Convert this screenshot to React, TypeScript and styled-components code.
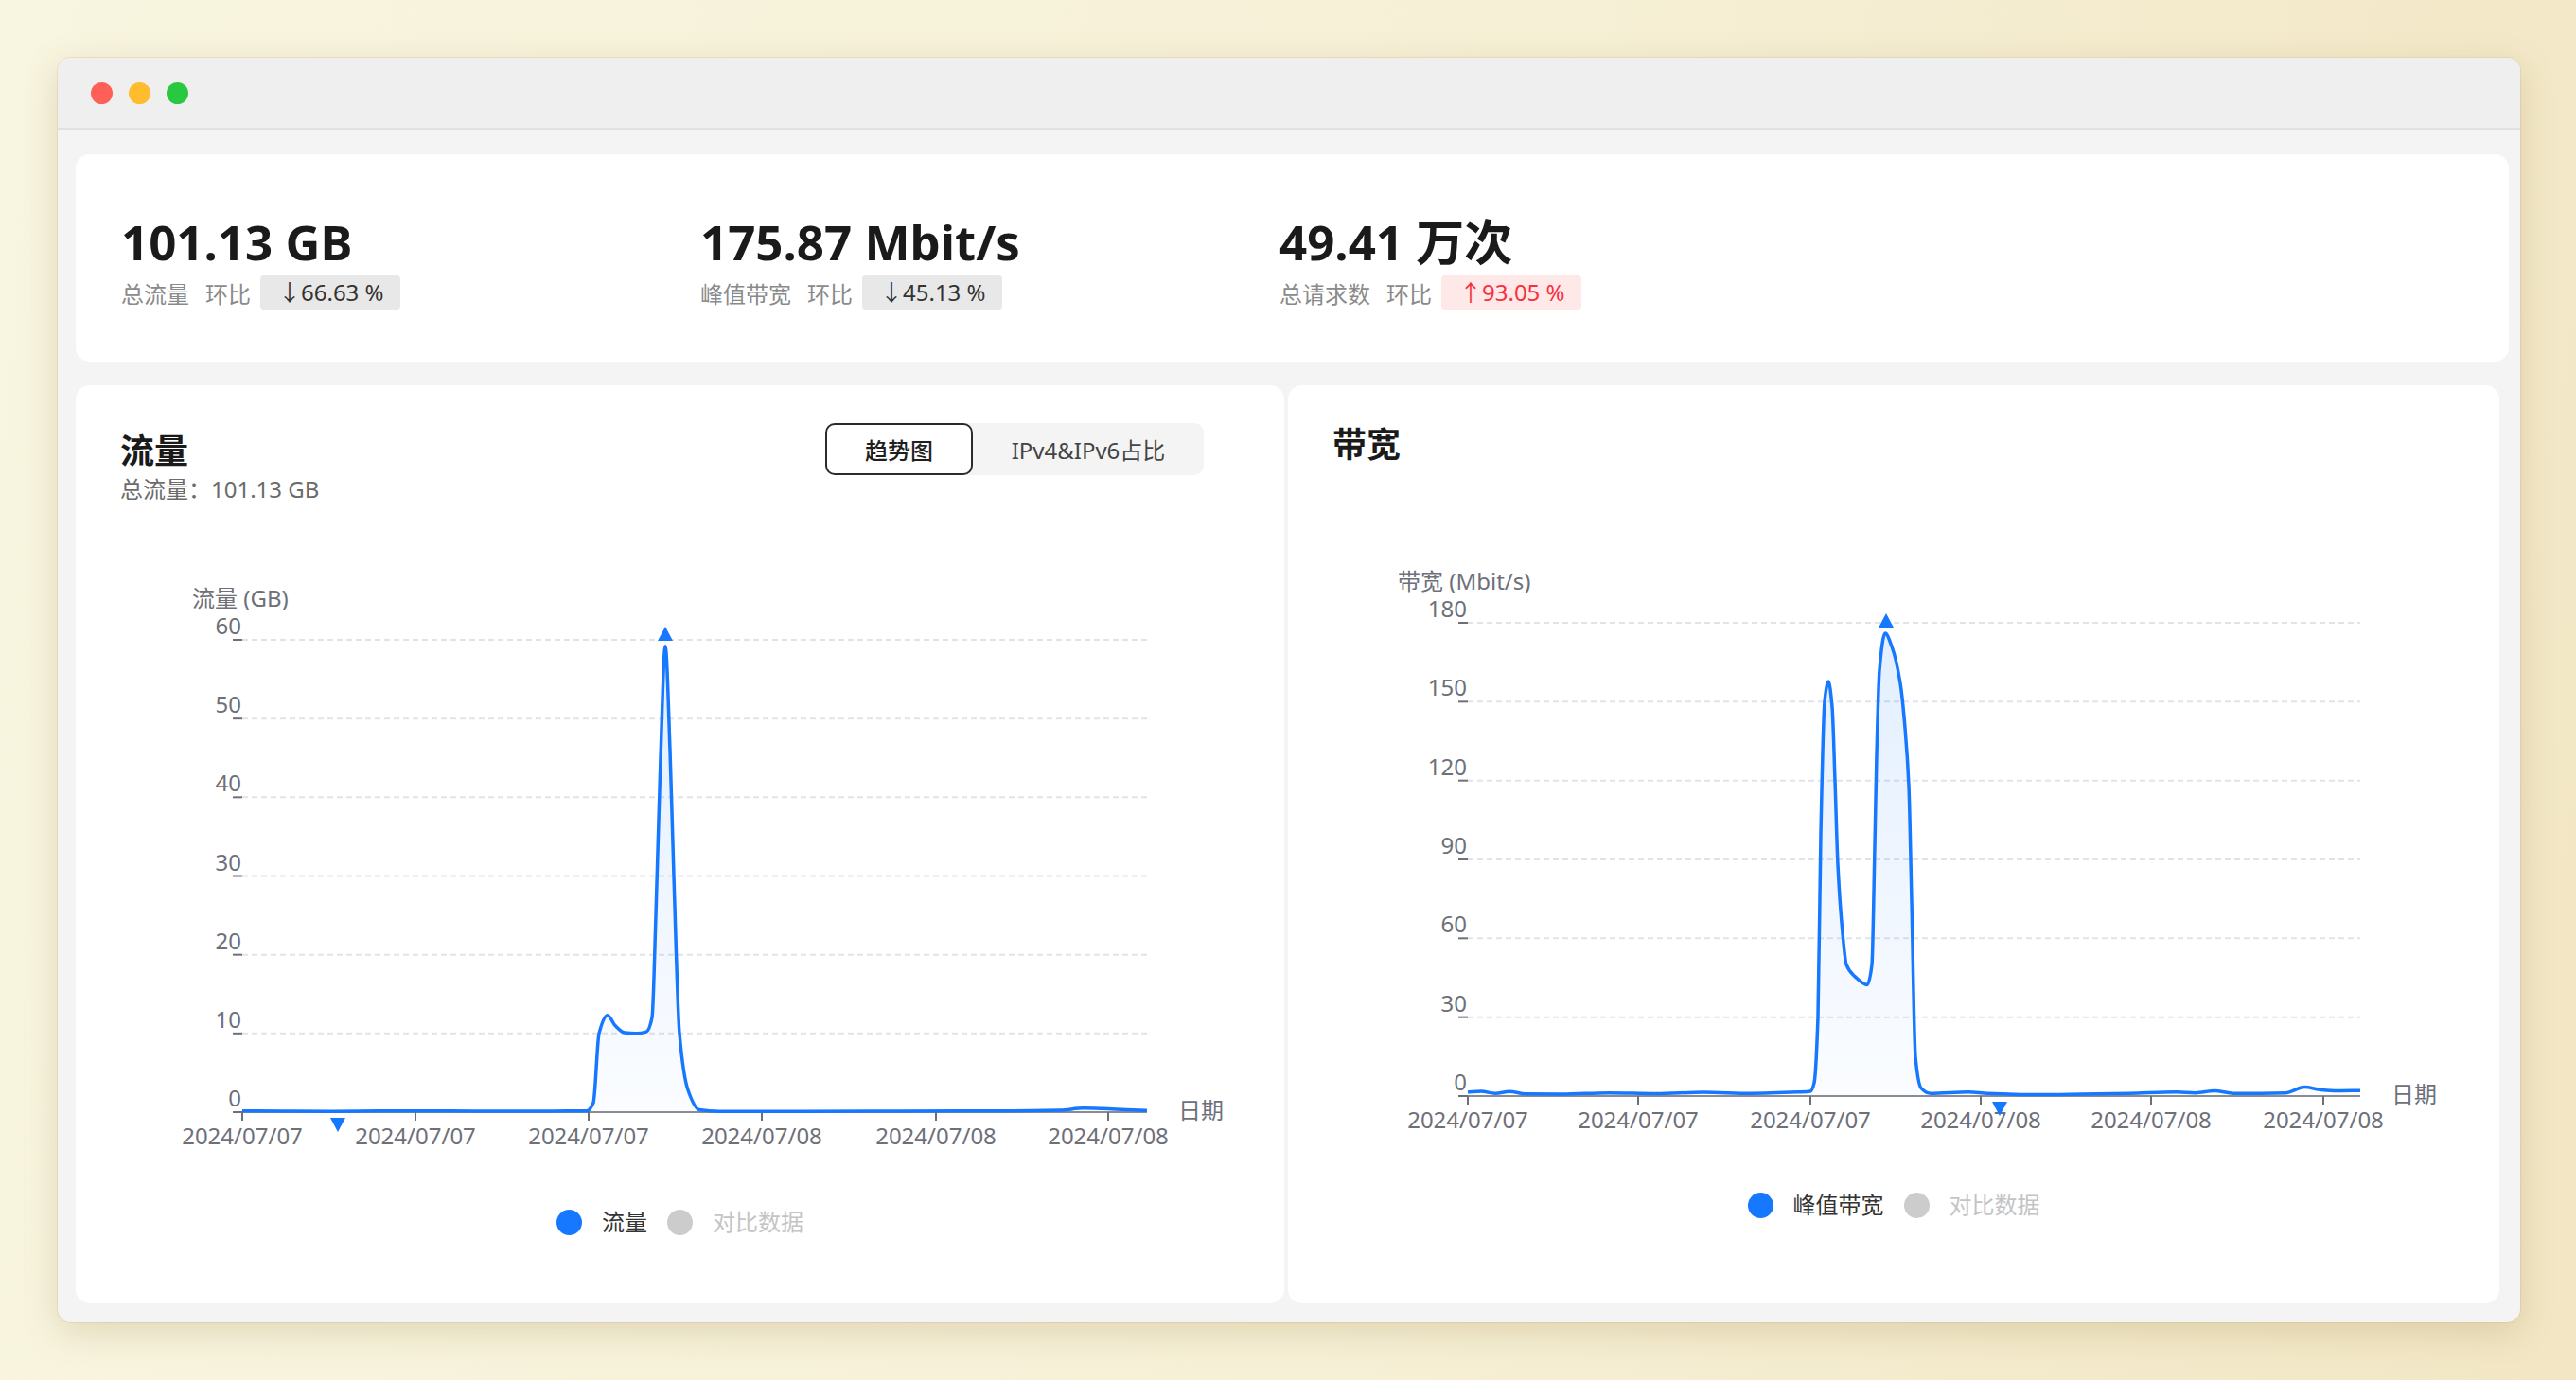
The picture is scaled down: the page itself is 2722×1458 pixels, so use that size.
import React from 'react';
import styled, { createGlobalStyle } from 'styled-components';

const FONT = `"Noto Sans", "Noto Sans CJK SC", sans-serif`;
const BLUE = '#1677ff';

const GlobalStyle = createGlobalStyle`
  html, body { margin: 0; height: 100%; }
  body {
    font-family: ${FONT};
    background: linear-gradient(100deg, #f8f5e0 0%, #f6f0d6 55%, #f2e6c4 100%);
  }
  #root { height: 100%; }
`;

const Page = styled.div`
  height: 100vh;
  box-sizing: border-box;
  padding: 61px 59px 61px 61px;
  display: flex;
`;

const Window = styled.div`
  flex: 1;
  display: flex;
  flex-direction: column;
  background: #f4f4f4;
  border-radius: 14px;
  overflow: hidden;
  box-shadow: 0 10px 36px rgba(140, 115, 50, 0.22), 0 0 0 1px rgba(200, 185, 140, 0.25);
`;

const TitleBar = styled.div`
  height: 74px;
  flex: none;
  display: flex;
  align-items: center;
  gap: 17px;
  padding-left: 35px;
  background: #efefef;
  border-bottom: 2px solid #e1e1e1;
`;

const Light = styled.span<{ $color: string }>`
  width: 23px;
  height: 23px;
  border-radius: 50%;
  background: ${(p) => p.$color};
`;

const Content = styled.div`
  flex: 1;
  min-height: 0;
  display: flex;
  flex-direction: column;
  gap: 25px;
  padding: 26px 12px 20px 19px;
`;

const StatCard = styled.section`
  background: #fff;
  border-radius: 15px;
  padding: 62px 48px 55px;
  display: flex;
`;

const StatItem = styled.div`
  width: 612px;
`;

const StatValue = styled.div`
  font-size: 51px;
  line-height: 60px;
  font-weight: 700;
  color: #1a1a1a;
`;

const StatMeta = styled.div`
  display: flex;
  align-items: center;
  margin-top: 6px;
  height: 36px;
  font-size: 24px;
`;

const MetaLabel = styled.span`
  color: #8a8a8a;
  & + & { margin-left: 17px; }
`;

const Badge = styled.span<{ $up?: boolean }>`
  margin-left: 10px;
  height: 36px;
  line-height: 36px;
  padding: 0 17px 0 19px;
  border-radius: 4px;
  background: ${(p) => (p.$up ? '#ffe8e8' : '#e8e8e8')};
  color: ${(p) => (p.$up ? '#f5313d' : '#333')};
`;

const ChartsRow = styled.div`
  flex: 1;
  min-height: 0;
  display: grid;
  grid-template-columns: 1277px 1280px;
  gap: 4px;
`;

const ChartCard = styled.section`
  background: #fff;
  border-radius: 15px;
  padding-top: 40px;
  display: flex;
  flex-direction: column;
  overflow: hidden;
`;

const CardHeader = styled.div<{ $h: number }>`
  height: ${(p) => p.$h}px;
  padding: 0 47px;
  display: flex;
  align-items: center;
  justify-content: space-between;
`;

const CardTitle = styled.h2`
  margin: 0;
  font-size: 36px;
  font-weight: 700;
  color: #1a1a1a;
`;

const Subtitle = styled.div`
  padding: 0 47px;
  font-size: 24px;
  line-height: 30px;
  color: #6b6b6b;
`;

const Segmented = styled.div`
  display: flex;
  width: 400px;
  height: 55px;
  margin-right: 38px;
  background: #f4f4f4;
  border-radius: 10px;
`;

const Segment = styled.button<{ $active?: boolean }>`
  box-sizing: border-box;
  height: 55px;
  flex: ${(p) => (p.$active ? '0 0 156px' : '1')};
  border: ${(p) => (p.$active ? '2px solid #2b2b2b' : 'none')};
  border-radius: 10px;
  background: ${(p) => (p.$active ? '#fff' : 'transparent')};
  font-family: ${FONT};
  font-size: 24px;
  font-weight: ${(p) => (p.$active ? 500 : 400)};
  color: ${(p) => (p.$active ? '#1f1f1f' : '#444')};
  padding: 0;
`;

const ChartSvg = styled.svg<{ $top: number }>`
  display: block;
  flex: none;
  margin-top: ${(p) => p.$top}px;
  font-family: ${FONT};
  overflow: visible;
`;

const Legend = styled.div`
  margin-top: 46px;
  display: flex;
  justify-content: center;
  gap: 21px;
  font-size: 24px;
  line-height: 30px;
`;

const LegendItem = styled.div<{ $muted?: boolean }>`
  display: flex;
  align-items: center;
  gap: 21px;
  color: ${(p) => (p.$muted ? '#c4c4c4' : '#333')};
`;

const Dot = styled.span<{ $color: string }>`
  width: 27px;
  height: 27px;
  border-radius: 50%;
  background: ${(p) => p.$color};
`;

type Pt = [number, number];

// monotone cubic, same feel as a smoothed echarts line
function monotonePath(pts: Pt[]): string {
  const n = pts.length;
  const dx: number[] = [];
  const m: number[] = [];
  for (let i = 0; i < n - 1; i++) {
    dx.push(pts[i + 1][0] - pts[i][0]);
    m.push((pts[i + 1][1] - pts[i][1]) / dx[i]);
  }
  const t: number[] = new Array(n).fill(0);
  t[0] = m[0];
  t[n - 1] = m[n - 2];
  for (let i = 1; i < n - 1; i++) {
    if (m[i - 1] * m[i] <= 0) t[i] = 0;
    else {
      const a = dx[i - 1];
      const b = dx[i];
      t[i] = (3 * (a + b)) / ((2 * b + a) / m[i - 1] + (b + 2 * a) / m[i]);
    }
  }
  let d = `M${pts[0][0]},${pts[0][1]}`;
  for (let i = 0; i < n - 1; i++) {
    const h = dx[i] / 3;
    d += ` C${pts[i][0] + h},${pts[i][1] + t[i] * h} ${pts[i + 1][0] - h},${pts[i + 1][1] - t[i + 1] * h} ${pts[i + 1][0]},${pts[i + 1][1]}`;
  }
  return d;
}

interface ChartConfig {
  id: string;
  width: number;
  offset: number; // page x of the card's left edge, data is written in page x
  x0: number;
  x1: number;
  yBase: number;
  yTop: number;
  max: number;
  step: number;
  yName: string;
  yNameX: number;
  ticks: number[];
  labels: string[];
  data: Pt[];
  maxMark: [number, number];
  minMark: [number, number];
}

const SVG_HEIGHT = 640;

function LineChart({ c, top }: { c: ChartConfig; top: number }) {
  const scale = (c.yBase - c.yTop) / c.max;
  const pts: Pt[] = c.data.map(([x, v]) => [x - c.offset, c.yBase - v * scale]);
  const line = monotonePath(pts);
  const area = `${line} L${pts[pts.length - 1][0]},${c.yBase} L${pts[0][0]},${c.yBase} Z`;
  const steps: number[] = [];
  for (let v = 0; v <= c.max; v += c.step) steps.push(v);
  const [mx, my] = c.maxMark;
  const [nx, ny] = c.minMark;

  return (
    <ChartSvg $top={top} width={c.width} height={SVG_HEIGHT}>
      <defs>
        <linearGradient id={`fill-${c.id}`} x1="0" y1="0" x2="0" y2="1">
          <stop offset="0" stopColor={BLUE} stopOpacity={0.12} />
          <stop offset="1" stopColor={BLUE} stopOpacity={0.02} />
        </linearGradient>
      </defs>
      <text x={c.yNameX} y={c.yTop - 35} fontSize={24} fill="#6e7079">{c.yName}</text>
      {steps.map((v) => {
        const y = c.yBase - v * scale;
        return (
          <g key={v}>
            {v > 0 && (
              <line x1={c.x0} x2={c.x1} y1={y} y2={y} stroke="#e0e3ea" strokeWidth={2} strokeDasharray="6 4" />
            )}
            <line x1={c.x0 - 10} x2={c.x0} y1={y} y2={y} stroke="#6e7079" strokeWidth={2} />
            <text x={c.x0 - 1} y={y - 6} fontSize={24} fill="#6e7079" textAnchor="end">{v}</text>
          </g>
        );
      })}
      <path d={area} fill={`url(#fill-${c.id})`} />
      <line x1={c.x0} x2={c.x1} y1={c.yBase} y2={c.yBase} stroke="#8a8c94" strokeWidth={2} />
      {c.ticks.map((tx, i) => (
        <g key={tx}>
          <line x1={tx} x2={tx} y1={c.yBase} y2={c.yBase + 9} stroke="#6e7079" strokeWidth={2} />
          <text x={tx} y={c.yBase + 34} fontSize={24} fill="#6e7079" textAnchor="middle">{c.labels[i]}</text>
        </g>
      ))}
      <text x={c.x1 + 33} y={c.yBase + 7} fontSize={24} fill="#6e7079">日期</text>
      <path d={line} fill="none" stroke={BLUE} strokeWidth={3.5} strokeLinejoin="round" />
      <polygon points={`${mx - 8},${my} ${mx + 8},${my} ${mx},${my - 15}`} fill={BLUE} />
      <polygon points={`${nx - 8},${ny} ${nx + 8},${ny} ${nx},${ny + 15}`} fill={BLUE} />
    </ChartSvg>
  );
}

const DATES = ['2024/07/07', '2024/07/07', '2024/07/07', '2024/07/08', '2024/07/08', '2024/07/08'];

const flowChart: ChartConfig = {
  id: 'flow',
  width: 1277,
  offset: 80,
  x0: 176,
  x1: 1132,
  yBase: 585,
  yTop: 86,
  max: 60,
  step: 10,
  yName: '流量 (GB)',
  yNameX: 123,
  ticks: [176, 359, 542, 725, 909, 1091],
  labels: DATES,
  data: [
    [256, 0.15], [300, 0.12], [350, 0.1], [400, 0.14], [450, 0.16], [500, 0.12], [550, 0.12],
    [600, 0.14], [620, 0.15], [627, 1.2], [633, 10], [642, 12.3], [650, 11], [660, 10.1],
    [672, 10], [683, 10.2], [689, 12], [693, 25], [698, 45], [703, 59.2], [708, 46], [712, 30],
    [718, 10], [727, 2.8], [739, 0.3], [760, 0.1], [850, 0.1], [950, 0.12], [1050, 0.15],
    [1120, 0.25], [1145, 0.5], [1165, 0.45], [1190, 0.3], [1212, 0.2],
  ],
  maxMark: [623, 87],
  minMark: [277, 591],
};

const bandwidthChart: ChartConfig = {
  id: 'bw',
  width: 1280,
  offset: 1361,
  x0: 190,
  x1: 1133,
  yBase: 586,
  yTop: 86,
  max: 180,
  step: 30,
  yName: '带宽 (Mbit/s)',
  yNameX: 116,
  ticks: [190, 370, 552, 732, 912, 1094],
  labels: DATES,
  data: [
    [1551, 1.5], [1565, 1.8], [1580, 1.0], [1595, 1.7], [1612, 0.8], [1650, 0.7], [1700, 1.2],
    [1750, 0.9], [1800, 1.4], [1850, 1.0], [1900, 1.5], [1913, 1.8], [1917, 5], [1921, 30],
    [1924, 100], [1928, 150], [1932, 157.7], [1936, 148], [1939, 120], [1942, 88], [1947, 62],
    [1951, 50], [1960, 45.5], [1973, 42.3], [1978, 50], [1981, 95], [1983, 130], [1986, 162],
    [1992, 176], [1999, 171], [2008, 157], [2013, 140], [2017, 118], [2020, 74], [2024, 15],
    [2030, 3], [2040, 1], [2080, 1.5], [2100, 1.0], [2150, 0.5], [2200, 0.7], [2250, 1.0],
    [2300, 1.5], [2320, 1.2], [2340, 2.0], [2360, 1.0], [2415, 1.2], [2435, 3.4], [2452, 2.4],
    [2470, 2.0], [2494, 2.1],
  ],
  maxMark: [632, 91],
  minMark: [752, 592],
};

export default function App() {
  return (
    <Page>
      <GlobalStyle />
      <Window>
        <TitleBar>
          <Light $color="#fe5f57" />
          <Light $color="#febc2e" />
          <Light $color="#28c840" />
        </TitleBar>
        <Content>
          <StatCard>
            <StatItem>
              <StatValue>101.13 GB</StatValue>
              <StatMeta>
                <MetaLabel>总流量</MetaLabel>
                <MetaLabel>环比</MetaLabel>
                <Badge>↓66.63 %</Badge>
              </StatMeta>
            </StatItem>
            <StatItem>
              <StatValue>175.87 Mbit/s</StatValue>
              <StatMeta>
                <MetaLabel>峰值带宽</MetaLabel>
                <MetaLabel>环比</MetaLabel>
                <Badge>↓45.13 %</Badge>
              </StatMeta>
            </StatItem>
            <StatItem>
              <StatValue>49.41 万次</StatValue>
              <StatMeta>
                <MetaLabel>总请求数</MetaLabel>
                <MetaLabel>环比</MetaLabel>
                <Badge $up>↑93.05 %</Badge>
              </StatMeta>
            </StatItem>
          </StatCard>

          <ChartsRow>
            <ChartCard>
              <CardHeader $h={55}>
                <CardTitle>流量</CardTitle>
                <Segmented>
                  <Segment $active>趋势图</Segment>
                  <Segment>IPv4&amp;IPv6占比</Segment>
                </Segmented>
              </CardHeader>
              <Subtitle>总流量：101.13 GB</Subtitle>
              <LineChart c={flowChart} top={58} />
              <Legend>
                <LegendItem><Dot $color={BLUE} />流量</LegendItem>
                <LegendItem $muted><Dot $color="#cccccc" />对比数据</LegendItem>
              </Legend>
            </ChartCard>

            <ChartCard>
              <CardHeader $h={40}>
                <CardTitle>带宽</CardTitle>
              </CardHeader>
              <LineChart c={bandwidthChart} top={85} />
              <Legend>
                <LegendItem><Dot $color={BLUE} />峰值带宽</LegendItem>
                <LegendItem $muted><Dot $color="#cccccc" />对比数据</LegendItem>
              </Legend>
            </ChartCard>
          </ChartsRow>
        </Content>
      </Window>
    </Page>
  );
}
